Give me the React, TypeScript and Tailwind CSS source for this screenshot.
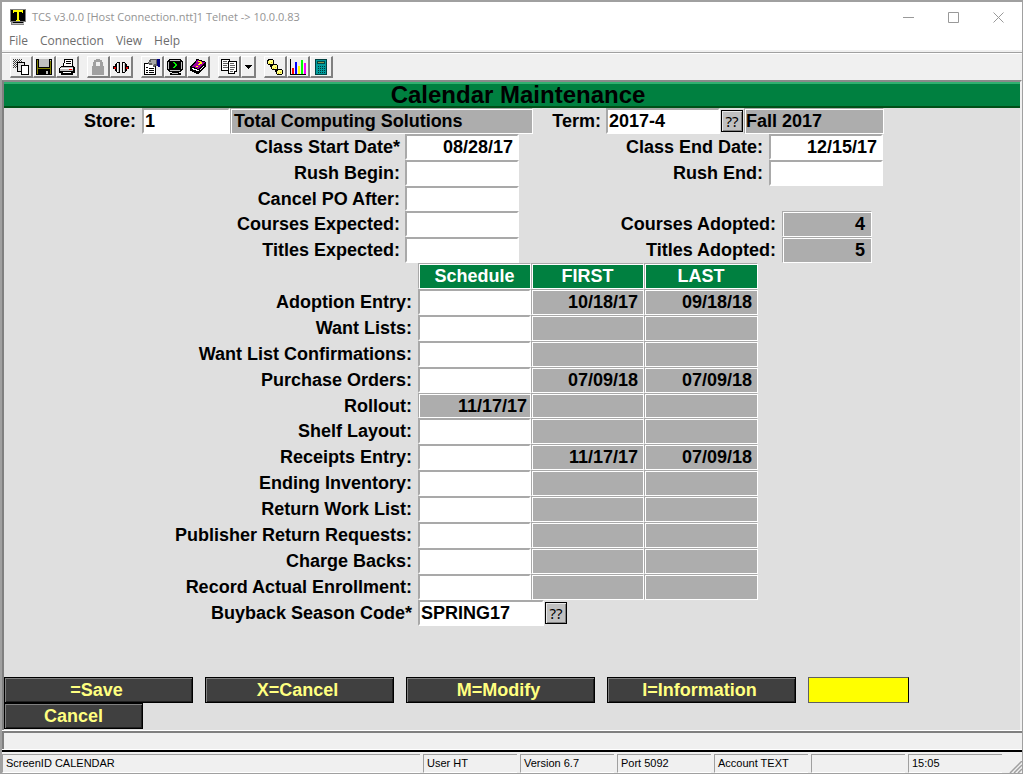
import React, { useState } from 'react';

const field =
  'block h-full border-2 border-t-[#a9a9a9] border-l-[#a9a9a9] border-r-white border-b-white bg-white pl-px text-black outline-none';
const display =
  'block border border-t-[#a9a9a9] border-l-[#a9a9a9] border-r-white border-b-white bg-[#adadad] shadow-[inset_1px_1px_0_#fff]';
const labelText = 'text-right whitespace-nowrap';

function Pixels({ fill, d }: { fill: string; d: string }) {
  return <path fill={fill} d={d} />;
}

function ToolIcon({ name }: { name: string }) {
  const svg = (children: React.ReactNode, w = 16) => (
    <svg width={w} height="16" viewBox={`0 0 ${w} 16`} shapeRendering="crispEdges" aria-hidden="true">
      {children}
    </svg>
  );
  switch (name) {
    case 'Copy screen':
      return svg(
        <>
          <defs>
            <pattern id="stipple" width="2" height="2" patternUnits="userSpaceOnUse">
              <path d="M0 0h1v1H0zM1 1h1v1H1z" fill="#404040" />
            </pattern>
          </defs>
          <rect width="9" height="9" fill="url(#stipple)" />
          <Pixels fill="#000" d="M4 3h8v10H4z" />
          <Pixels fill="#e0e0e0" d="M5 4h6v8H5z" />
          <Pixels fill="#000" d="M8 6h8v10H8z" />
          <Pixels fill="#fff" d="M9 7h6v8H9z" />
        </>,
      );
    case 'Save':
      return svg(
        <>
          <Pixels fill="#000" d="M0 0h16v16H0z" />
          <Pixels fill="#808000" d="M1 1h1v14H1zM14 2h1v13h-1zM2 9h12v1H2z" />
          <Pixels fill="#c0c0c0" d="M3 0h10v8H3zM14 1h1v1h-1zM10 12h2v3h-2z" />
        </>,
      );
    case 'Print':
      return svg(
        <>
          <Pixels fill="#000" d="M5 0h9v8H4V4h1zM2 7h13v1h1v6h-2v2H2v-2H0V9h1V8h1z" />
          <Pixels fill="#fff" d="M6 1h7v6H5V4h1zM1 9h13v1H1zM4 13h8v1H4z" />
          <Pixels fill="#000" d="M7 2h5v1H7zM7 4h5v1H7zM3 12h10v1H3z" />
          <Pixels fill="#c0c0c0" d="M2 8h12v1H2zM1 10h13v2H1z" />
          <Pixels fill="#f00" d="M10 10h3v1h-3z" />
        </>,
      );
    case 'Lock':
      return svg(
        <>
          <Pixels fill="#a0a0a0" d="M6 0h4v1h2v2h1v4h1v9H2V7h1V3h1V1h2z" />
          <Pixels fill="#efefef" d="M6 3h4v4H6zM14 8h1v8h-1z" />
        </>,
      );
    case 'Connect':
      return svg(
        <>
          <Pixels fill="#000" d="M4 3h3v11H4v-1H3v-1H2v-2H0V7h2V5h1V4h1zM9 3h3v1h1v1h1v2h2v3h-2v2h-1v1h-1v1H9z" />
          <Pixels fill="#fff" d="M4 4h1v9H4zM10 4h1v9h-1z" />
          <Pixels fill="#c0c0c0" d="M5 4h1v9H5zM11 4h1v9h-1z" />
          <Pixels fill="#e00000" d="M1 8h2v2H1zM13 8h2v2h-2z" />
        </>,
      );
    case 'Properties':
      return svg(
        <>
          <Pixels fill="#000" d="M0 4h12v12H0z" />
          <Pixels fill="#fff" d="M1 5h10v10H1z" />
          <Pixels fill="#000" d="M2 8h2v1H2zM5 9h5v1H5zM2 11h2v1H2zM5 11h5v1H5zM2 13h2v1H2zM5 13h5v1H5z" />
          <Pixels fill="#606060" d="M6 0h7v7h-2v1H9V6H5V5H4V3h1V1h1z" />
          <Pixels fill="#a8a8a8" d="M7 1h5v4h-2v1H8V4H5V3h2z" />
          <Pixels fill="#000080" d="M13 0h3v8h-2V7h-1z" />
        </>,
      );
    case 'Terminal':
      return svg(
        <>
          <Pixels fill="#000" d="M2 0h12v1h1v1h1v9h-1v1h-1v1h-2v1h2v2H3v-2h2v-1H2v-1H1v-1H0V2h1V1h1z" />
          <Pixels fill="#c0c0c0" d="M3 1h10v1H3zM1 3h1v7H1zM14 3h1v7h-1zM3 11h10v1H3zM5 14h6v1H5z" />
          <Pixels fill="#00f000" d="M6 3h2v1h1v1h1v2H9v1H8v1H6V8h1V7h1V5H7V4H6z" />
        </>,
      );
    case 'Help':
      return svg(
        <>
          <Pixels fill="#000" d="M6 0h3v1h3v1h3v1h1v5h-1v1h-1v1h-1v1h-1v1h-1v1h-1v1H9v1H6v-1H4v-1H2v-1H0V7h1V6h1V5h1V4h1V3h1V2h1z" />
          <Pixels fill="#a000a0" d="M7 1h2v1h3v1h3v1h-1v1h-1v1h-1v1h-1v1h-1v1H9v1H7V9H5V8H2V7h1V6h1V5h1V4h1V2h1z" />
          <Pixels fill="#fff" d="M2 9h2v1h3v1h2v1H6v-1H3v-1H2zM10 10h1V9h1V8h1V7h1v1h-1v1h-1v1h-1v1h-1z" />
          <Pixels fill="#ff0" d="M8 2h3v1h1v2h-2v1H8V5h1V4h1V3H8zM6 7h2v1H6z" />
        </>,
      );
    case 'Scripts':
      return svg(
        <>
          <Pixels fill="#000" d="M0 0h9v12H0z" />
          <Pixels fill="#fff" d="M1 1h7v10H1z" />
          <Pixels fill="#606060" d="M2 2h4v1H2zM2 4h5v1H2zM2 6h4v1H2zM2 8h5v1H2z" />
          <Pixels fill="#000" d="M7 2h9v11h-2v2H7z" />
          <Pixels fill="#fff" d="M8 3h7v9h-2v2H8z" />
          <Pixels fill="#606060" d="M9 4h4v1H9zM9 6h5v1H9zM9 8h5v1H9zM9 10h4v1H9zM9 12h3v1H9z" />
        </>,
      );
    case 'Chain':
      return svg(
        <>
          <Pixels fill="#000" d="M1 0h5v1h1v4H6v1H1V5H0V1h1zM5 5h5v1h1v4h-1v1H5v-1H4V6h1zM10 10h5v1h1v4h-1v1h-5v-1H9v-4h1zM3 6h1v2H3zM8 11h1v2H8z" />
          <Pixels fill="#ffff80" d="M2 1h4v4H1V2h1zM6 6h4v4H5V7h1zM11 11h4v4h-5v-3h1z" />
          <Pixels fill="#e0c000" d="M2 4h1v1H2zM4 3h1v1H4zM6 9h1v1H6zM8 8h1v1H8zM11 14h1v1h-1zM13 13h1v1h-1z" />
        </>,
      );
    case 'Statistics':
      return svg(
        <>
          <Pixels fill="#000" d="M0 0h1v15h15v1H0z" />
          <Pixels fill="#f00" d="M2 9h2v6H2z" />
          <Pixels fill="#00f" d="M5 3h2v12H5z" />
          <Pixels fill="#ff0" d="M8 7h2v8H8z" />
          <Pixels fill="#0f0" d="M11 1h2v14h-2z" />
          <Pixels fill="#f0f" d="M14 4h2v11h-2z" />
        </>,
      );
    case 'Calculator':
      return svg(
        <>
          <Pixels fill="#004040" d="M2 0h12v16H2z" />
          <Pixels fill="#009c9c" d="M3 1h10v14H3z" />
          <Pixels fill="#004848" d="M4 2h8v3H4z" />
          <Pixels fill="#8a9a50" d="M5 3h6v1H5z" />
          <Pixels fill="#003838" d="M5 7h1v1H5zM7 7h1v1H7zM9 7h1v1H9zM11 7h1v1h-1zM5 9h1v1H5zM7 9h1v1H7zM9 9h1v1H9zM11 9h1v1h-1zM5 11h1v1H5zM7 11h1v1H7zM9 11h1v1H9zM11 11h1v1h-1zM5 13h1v1H5zM7 13h1v1H7zM9 13h1v1H9zM11 13h1v1h-1z" />
        </>,
      );
    default:
      return svg(<Pixels fill="#000" d="M0 6h7v1H6v1H5v1H4v1H3V9H2V8H1V7H0z" />, 7);
  }
}

const toolGroups = [
  ['Copy screen', 'Save', 'Print'],
  ['Lock', 'Connect'],
  ['Properties', 'Terminal', 'Help'],
  ['Scripts', 'More scripts'],
  ['Chain', 'Statistics', 'Calculator'],
];

function Toolbar() {
  return (
    <div className="flex h-7 gap-2 border-t border-[#a0a0a0] bg-[#f0f0f0] pt-[3px] pl-2 shadow-[inset_0_1px_0_#fff]">
      {toolGroups.map((group) => (
        <div key={group[0]} className="flex">
          {group.map((name) => (
            <button
              key={name}
              type="button"
              aria-label={name}
              className={`flex h-[22px] items-center justify-center border-t border-l border-r-2 border-b-2 border-t-white border-l-white border-r-[#808080] border-b-[#808080] ${
                name === 'More scripts' ? 'w-[15px]' : 'w-[23px]'
              }`}
            >
              <ToolIcon name={name} />
            </button>
          ))}
        </div>
      ))}
    </div>
  );
}

function TitleBar() {
  return (
    <header className="flex h-[30px] items-center bg-white pr-px pl-2 font-['Open_Sans','Noto_Sans',sans-serif] text-[#949494]">
      <svg width="16" height="16" viewBox="0 0 16 16" shapeRendering="crispEdges" className="mr-1.5" aria-hidden="true">
        <path fill="#808080" d="M0 0h16v13h-2v3H1v-3H0z" />
        <path fill="#c0c0c0" d="M2 14h12v1H2z" />
        <path fill="#000" d="M1 1h14v11H1zM3 13h10v1H3z" />
        <path fill="#ff0" d="M3 1h10v3h-1V3H9v8h1v1H6v-1h1V3H4v1H3z" />
      </svg>
      <h1 className="flex-1 text-[11px]">TCS v3.0.0 [Host Connection.ntt]1 Telnet -&gt; 10.0.0.83</h1>
      <div className="flex text-[#999]">
        {[
          ['Minimize', 'M0 5.5h11'],
          ['Maximize', 'M.5.5h10v10H.5z'],
          ['Close', 'M.5.5l10 10M10.5.5l-10 10'],
        ].map(([name, d]) => (
          <button key={name} type="button" aria-label={name} className="flex w-[45px] justify-center">
            <svg width="11" height="11" viewBox="0 0 11 11" fill="none" stroke="currentColor">
              <path d={d} />
            </svg>
          </button>
        ))}
      </div>
    </header>
  );
}

function Lookup({ label }: { label: string }) {
  return (
    <button
      type="button"
      aria-label={label}
      className="mx-px flex h-[22px] w-[22px] shrink-0 items-center justify-center self-center border border-black bg-[#c0c0c0] font-['Noto_Sans',sans-serif] text-[15px] leading-none font-normal shadow-[inset_1px_1px_0_#e8e8e8,inset_-1px_-1px_0_#808080]"
    >
      ??
    </button>
  );
}

function Field({ id, label, labelWidth, width, value = '', align = '' }: {
  id: string;
  label: string;
  labelWidth: string;
  width: string;
  value?: string;
  align?: string;
}) {
  const [text, setText] = useState(value);
  return (
    <>
      <label htmlFor={id} className={`${labelText} ${labelWidth}`}>
        {label}
      </label>
      <input id={id} value={text} onChange={(e) => setText(e.target.value)} className={`${field} ${width} ${align}`} />
    </>
  );
}

const schedule: { label: string; rollout?: string; first?: string; last?: string }[] = [
  { label: 'Adoption Entry:', first: '10/18/17', last: '09/18/18' },
  { label: 'Want Lists:' },
  { label: 'Want List Confirmations:' },
  { label: 'Purchase Orders:', first: '07/09/18', last: '07/09/18' },
  { label: 'Rollout:', rollout: '11/17/17' },
  { label: 'Shelf Layout:' },
  { label: 'Receipts Entry:', first: '11/17/17', last: '07/09/18' },
  { label: 'Ending Inventory:' },
  { label: 'Return Work List:' },
  { label: 'Publisher Return Requests:' },
  { label: 'Charge Backs:' },
  { label: 'Record Actual Enrollment:' },
];

function ScheduleTable() {
  const head =
    'h-[26px] border border-t-[#a9a9a9] border-l-[#a9a9a9] border-r-white border-b-white bg-[#008040] text-center text-white shadow-[inset_1px_1px_0_#fff] leading-6';
  return (
    <table className="w-[754px] table-fixed border-separate border-spacing-0">
      <colgroup>
        <col className="w-[414px]" />
        <col className="w-[113px]" />
        <col className="w-[113px]" />
        <col className="w-[114px]" />
      </colgroup>
      <thead>
        <tr>
          <td className="p-0" />
          <th scope="col" className="p-0"><div className={head}>Schedule</div></th>
          <th scope="col" className="p-0"><div className={head}>FIRST</div></th>
          <th scope="col" className="p-0"><div className={head}>LAST</div></th>
        </tr>
      </thead>
      <tbody>
        {schedule.map((row, i) => {
          const height = row.rollout ? 'h-[25px]' : 'h-[26px]';
          const cell = `${display} ${height} pr-[5px] text-right leading-6`;
          return (
            <tr key={row.label}>
              <th scope="row" className="p-0">
                <label htmlFor={`schedule-${i}`} className={`block ${height} ${labelText} pr-1.5 leading-[26px]`}>
                  {row.label}
                </label>
              </th>
              <td className="p-0">
                <div className={height}>
                  {row.rollout ? (
                    <output id={`schedule-${i}`} className={`${display} ${height} pr-[3px] text-right leading-6`}>{row.rollout}</output>
                  ) : (
                    <input id={`schedule-${i}`} className={`${field} w-full text-right`} />
                  )}
                </div>
              </td>
              <td className="p-0"><div className={cell}>{row.first}</div></td>
              <td className="p-0"><div className={cell}>{row.last}</div></td>
            </tr>
          );
        })}
      </tbody>
    </table>
  );
}

const actionButton =
  'flex h-[26px] items-center justify-center border border-black bg-[#404040] text-[#ffff80] shadow-[inset_1px_1px_0_#808080,inset_-1px_-1px_0_#202020]';
const row = 'flex h-[26px] items-center';
const statusPanel = 'flex h-[19px] w-[94px] items-center border-t border-l border-b border-t-[#a0a0a0] border-l-[#a0a0a0] border-b-white pl-[3px] whitespace-nowrap';

export default function App() {
  return (
    <div className="flex min-h-screen flex-col border-t-2 border-r border-b border-l-2 border-[#a0a0a0] bg-[#f0f0f0] font-['Liberation_Sans',Arial,sans-serif] text-black">
      <TitleBar />
      <nav className="flex h-5 items-center gap-3 border-b-2 border-[#f0f0f0] bg-white pl-[7px] font-['Open_Sans','Noto_Sans',sans-serif] text-[12px] text-[#6d6d6d]">
        {['File', 'Connection', 'View', 'Help'].map((item) => (
          <button key={item} type="button">{item}</button>
        ))}
      </nav>
      <Toolbar />

      <main className="flex flex-1 flex-col border-t-2 border-r-2 border-l-2 border-t-[#8a8a8a] border-r-[#f0f0f0] border-l-[#808080] bg-[#dfdfdf] text-[18px] leading-6 font-bold">
        <h2 className="h-[26px] border-t-2 border-b-2 border-t-[#30b070] border-b-[#005018] bg-[#008040] pl-3 text-center text-[24px] leading-[22px]">
          Calendar Maintenance
        </h2>
        <div className={row}>
          <Field id="store" label="Store:" labelWidth="w-[138px] pr-1.5" width="w-[88px]" value="1" />
          <output className={`${display} h-full w-[303px] pl-[3px]`}>Total Computing Solutions</output>
          <Field id="term" label="Term:" labelWidth="w-[73px] pr-[5px]" width="w-[114px]" value="2017-4" />
          <Lookup label="Look up term" />
          <output className={`${display} h-full w-[140px] pl-px`}>Fall 2017</output>
        </div>
        <div className={row}>
          <Field id="class-start" label="Class Start Date*" labelWidth="w-[401px] pr-[5px]" width="w-[114px]" value="08/28/17" align="text-right pr-1" />
          <Field id="class-end" label="Class End Date:" labelWidth="w-[250px] pr-1.5" width="w-[114px]" value="12/15/17" align="text-right pr-1" />
        </div>
        <div className={row}>
          <Field id="rush-begin" label="Rush Begin:" labelWidth="w-[401px] pr-[5px]" width="w-[114px]" />
          <Field id="rush-end" label="Rush End:" labelWidth="w-[250px] pr-1.5" width="w-[114px]" />
        </div>
        <div className="flex h-[25px] items-center">
          <Field id="cancel-po" label="Cancel PO After:" labelWidth="w-[401px] pr-[5px]" width="w-[114px]" />
        </div>
        <div className={row}>
          <Field id="courses-expected" label="Courses Expected:" labelWidth="w-[401px] pr-[5px]" width="w-[114px]" />
          <label htmlFor="courses-adopted" className={`${labelText} w-[263px] pr-1.5`}>Courses Adopted:</label>
          <output id="courses-adopted" className={`${display} h-full w-[90px] pr-1.5 text-right`}>4</output>
        </div>
        <div className={row}>
          <Field id="titles-expected" label="Titles Expected:" labelWidth="w-[401px] pr-[5px]" width="w-[114px]" />
          <label htmlFor="titles-adopted" className={`${labelText} w-[263px] pr-1.5`}>Titles Adopted:</label>
          <output id="titles-adopted" className={`${display} h-full w-[90px] pr-1.5 text-right`}>5</output>
        </div>
        <ScheduleTable />
        <div className={row}>
          <Field id="buyback" label="Buyback Season Code*" labelWidth="w-[414px] pr-1.5" width="w-[126px]" value="SPRING17" />
          <Lookup label="Look up season code" />
        </div>

        <div className="mt-auto flex gap-3 pt-4">
          {['=Save', 'X=Cancel', 'M=Modify', 'I=Information'].map((name) => (
            <button key={name} type="button" className={`${actionButton} w-[189px] pr-1`}>{name}</button>
          ))}
          <div className="h-[26px] w-[101px] border border-[#606060] border-r-black bg-[#ffff00]" />
        </div>
        <button type="button" className={`${actionButton} mb-px w-[139px]`}>Cancel</button>
      </main>

      <div className="h-5 border-t border-b border-white">
        <div className="h-full border-t-2 border-l-2 border-[#808080]" />
      </div>
      <footer className="flex gap-[3px] border-t-2 border-black pt-0.5 text-[11px]">
        <div className={`${statusPanel} flex-1`}>ScreenID CALENDAR</div>
        <div className={statusPanel}>User HT</div>
        <div className={statusPanel}>Version 6.7</div>
        <div className={statusPanel}>Port 5092</div>
        <div className={statusPanel}>Account TEXT</div>
        <div className={statusPanel} />
        <div className={statusPanel}>15:05</div>
        <svg width="17" height="12" viewBox="0 0 17 12" className="self-end" stroke="#a0a0a0" strokeWidth="1.5" aria-hidden="true">
          <path d="M5 12L17 0M9 12l8-8M13 12l4-4" />
        </svg>
      </footer>
    </div>
  );
}
